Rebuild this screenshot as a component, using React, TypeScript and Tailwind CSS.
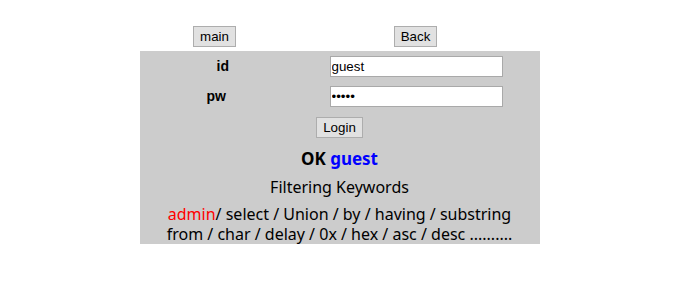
export default function App() {
  const btn =
    "h-[21px] px-[6px] bg-[#e1e1e1] border border-[#adadad] text-[13.33px] leading-none text-black font-['Liberation_Sans',Arial,sans-serif]";
  const input =
    "w-[173px] h-[21px] bg-white border border-[#a9a9a9] px-[1px] text-[13.33px] text-black font-['Liberation_Sans',Arial,sans-serif] outline-none";

  return (
    <div className="min-h-screen bg-white">
      <div className="w-[400px] mx-auto pt-[26px]">
        {/* top buttons */}
        <div className="grid grid-cols-[150px_250px] h-[25px]">
          <div className="flex justify-center">
            <button className={btn}>main</button>
          </div>
          <div className="flex justify-center pl-[2px]">
            <button className={btn}>Back</button>
          </div>
        </div>

        {/* login box */}
        <div className="bg-[#cccccc] pt-[5px] flex flex-col">
          <div className="grid grid-cols-[150px_250px] h-[21px] items-center">
            <div className="text-[14px] font-bold text-black pl-[77px] font-['Liberation_Sans',Arial,sans-serif]">id</div>
            <div className="flex pl-[40px]">
              <input className={input} defaultValue="guest" />
            </div>
          </div>
          <div className="grid grid-cols-[150px_250px] h-[21px] items-center mt-[9px]">
            <div className="text-[14px] font-bold text-black pl-[67px] font-['Liberation_Sans',Arial,sans-serif]">pw</div>
            <div className="flex pl-[40px]">
              <input type="password" className={input} defaultValue="guest" />
            </div>
          </div>
          <div className="flex justify-center mt-[10px]">
            <button className={btn + " h-[20px]"}>Login</button>
          </div>

          <div className="mt-[11px] text-center text-[17px] leading-[20px] font-bold text-black font-['Noto_Sans','Noto_Sans_CJK_KR',sans-serif]">
            OK <span className="text-[#0000ff]">guest</span>
          </div>
          <div className="mt-[8px] text-center text-[16px] leading-[20px] text-black font-['Noto_Sans','Noto_Sans_CJK_KR',sans-serif]">
            Filtering Keywords
          </div>
          <div className="mt-[7px] text-center text-[16px] leading-[20px] text-black font-['Noto_Sans','Noto_Sans_CJK_KR',sans-serif]">
            <span className="text-[#ff0000]">admin</span>/ select / Union / by / having / substring
            <br />
            from / char / delay / 0x / hex / asc / desc ..........
          </div>
        </div>
      </div>
    </div>
  );
}
